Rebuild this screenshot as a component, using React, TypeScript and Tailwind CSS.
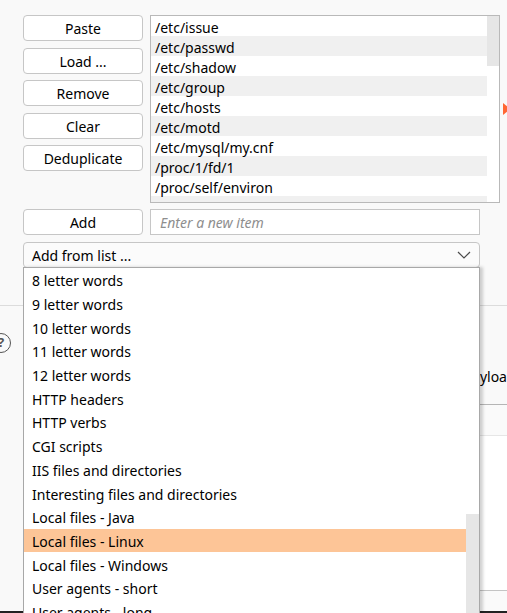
const ITEMS = [
  '/etc/issue',
  '/etc/passwd',
  '/etc/shadow',
  '/etc/group',
  '/etc/hosts',
  '/etc/motd',
  '/etc/mysql/my.cnf',
  '/proc/1/fd/1',
  '/proc/self/environ',
  '',
]

const LISTS = [
  '8 letter words',
  '9 letter words',
  '10 letter words',
  '11 letter words',
  '12 letter words',
  'HTTP headers',
  'HTTP verbs',
  'CGI scripts',
  'IIS files and directories',
  'Interesting files and directories',
  'Local files - Java',
  'Local files - Linux',
  'Local files - Windows',
  'User agents - short',
  'User agents - long',
]

const font = { fontFamily: '"Noto Sans", "Open Sans", sans-serif' }

function Btn({ label }: { label: string }) {
  return (
    <button className="flex h-[26px] w-[120px] items-center justify-center rounded-[4px] border border-[#c6c6c6] bg-white pt-[1px] text-[14px] text-black">
      {label}
    </button>
  )
}

export default function App() {
  return (
    <div className="relative h-[613px] w-[507px] overflow-hidden bg-[#f9f9f9] text-[14px] text-black" style={font}>
      {/* payload list panel */}
      <div className="flex h-[305px] flex-col pl-[23px] pt-[15px]">
        <div className="flex gap-[7px]">
          <div className="flex w-[120px] flex-col gap-[6.5px]">
            <Btn label="Paste" />
            <Btn label="Load ..." />
            <Btn label="Remove" />
            <Btn label="Clear" />
            <Btn label="Deduplicate" />
          </div>
          <div className="flex h-[188px] w-[350px] overflow-hidden border border-[#b9b9b9] bg-white">
            <div className="flex-1">
              {ITEMS.map((it, i) => (
                <div
                  key={i}
                  className={`flex h-[20px] items-center pl-[4px] pt-[3px] leading-none ${i % 2 ? 'bg-[#f0f0f0]' : 'bg-white'}`}
                >
                  {it}
                </div>
              ))}
            </div>
            <div className="w-[12px] bg-white">
              <div className="h-[50px] bg-[#e6e6e6]" />
            </div>
          </div>
        </div>

        <div className="mt-[6px] flex gap-[7px]">
          <Btn label="Add" />
          <div className="flex h-[26px] w-[330px] items-center border border-[#c6c6c6] bg-white pl-[9px] pt-[1px] italic text-[#8e8e8e]">
            Enter a new item
          </div>
        </div>

        <div className="relative mt-[7px] w-[457px]">
          <div className="flex h-[26px] items-center justify-between rounded-[4px] border border-[#c6c6c6] bg-[#fbfbfb] pl-[8px] pr-[8px] pt-[1px]">
            <span>Add from list ...</span>
            <svg width="14" height="8" viewBox="0 0 14 8" className="mb-[1px]">
              <polyline points="1,1 7,7 13,1" fill="none" stroke="#4a4a4a" strokeWidth="1.2" />
            </svg>
          </div>

          {/* open dropdown */}
          <div className="absolute left-0 top-[25px] z-10 flex h-[360px] w-[457px] border border-[#a8a8a8] bg-white shadow-[3px_0_3px_rgba(0,0,0,0.18)]">
            <div className="flex-1">
              {LISTS.map((l) => (
                <div
                  key={l}
                  className={`flex h-[23.7px] items-center pl-[8px] pt-[2px] ${l === 'Local files - Linux' ? 'bg-[#fdc597]' : ''}`}
                >
                  {l}
                </div>
              ))}
            </div>
            <div className="flex w-[13px] flex-col bg-white pt-[246px]">
              <div className="flex-1 bg-[#e6e6e6]" />
            </div>
          </div>
        </div>
      </div>

      {/* payload processing section (mostly hidden) */}
      <div className="border-t border-[#dcdcdc]">
        <div className="-ml-[9px] mt-[27px] flex h-[20px] items-center gap-[16px]">
          <div className="flex h-[20px] w-[20px] items-center justify-center rounded-full border-[1.5px] border-[#555] text-[13px] font-bold text-[#555]">
            ?
          </div>
          <span className="font-bold text-[#e8632b]">Payload processing</span>
        </div>
        <div className="mt-[13px] h-[20px] whitespace-nowrap pl-[32px] pt-[1px] leading-[20px]">
          You can define rules to perform various processing tasks on each payload before it is used.
        </div>
        <div className="ml-[150px] mt-[18px] flex h-[207px] flex-col border-t border-[#b5b5b5] bg-white">
          <div className="h-[31px] shrink-0 border-b border-[#e6e6e6] bg-[#fafafa]" />
          <div className="flex-1 border-b border-[#c4c4c4]" />
          <div className="h-[20px] shrink-0 bg-[#fafafa]" />
        </div>
        <div className="border-t-2 border-[#222]" />
      </div>

      {/* side marker */}
      <svg className="absolute left-[502px] top-[103px]" width="6" height="12" viewBox="0 0 6 12">
        <path d="M1 0 L6 4 L6 8 L1 12 Z" fill="#ff6633" />
      </svg>
    </div>
  )
}
